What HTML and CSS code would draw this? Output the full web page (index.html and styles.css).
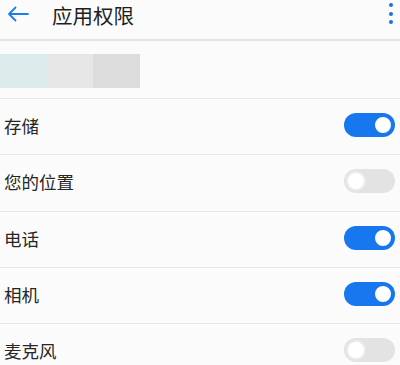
FILE: index.html
```html
<!DOCTYPE html>
<html lang="zh-CN">
<head>
<meta charset="utf-8">
<link rel="stylesheet" href="styles.css">
</head>
<body>
<div class="app">
  <header class="topbar">
    <svg class="back" width="22" height="16" viewBox="0 0 22 16"><path d="M21 8H2M8.5 1.5L2 8l6.5 6.5" fill="none" stroke="#1a7fe8" stroke-width="1.8" stroke-linecap="round" stroke-linejoin="round"/></svg>
    <h1 class="title">应用权限</h1>
    <div class="more"><span></span><span></span><span></span></div>
  </header>
  <section class="appinfo">
    <div class="blur"><i class="b1"></i><i class="b2"></i><i class="b3"></i></div>
  </section>
  <ul class="list">
    <li class="row"><span class="label">存储</span><span class="switch on"></span></li>
    <li class="row"><span class="label">您的位置</span><span class="switch"></span></li>
    <li class="row"><span class="label">电话</span><span class="switch on"></span></li>
    <li class="row"><span class="label">相机</span><span class="switch on"></span></li>
    <li class="row"><span class="label">麦克风</span><span class="switch"></span></li>
  </ul>
</div>
</body>
</html>
```
FILE: styles.css
```css
html, body {
  margin: 0;
  padding: 0;
  background: #fbfbfb;
}
body {
  font-family: "Noto Sans CJK SC", "Noto Sans", sans-serif;
  color: #222;
  width: 400px;
  height: 365px;
  overflow: hidden;
}
.topbar {
  height: 39px;
  display: flex;
  align-items: flex-start;
  border-bottom: 2px solid #e4e4e4;
  box-sizing: content-box;
}
.back {
  margin: 6px 0 0 7px;
  flex: none;
}
.title {
  margin: 0 0 0 23px;
  font-size: 20.5px;
  font-weight: 400;
  line-height: 30px;
  color: #1e1e1e;
  flex: 1;
}
.more {
  display: flex;
  flex-direction: column;
  gap: 4.5px;
  margin: 3px 7px 0 0;
}
.more span {
  width: 4px;
  height: 4px;
  border-radius: 50%;
  background: #1a72e0;
}
.appinfo {
  height: 58px;
  padding-top: 13px;
  box-sizing: border-box;
  border-bottom: 1px solid #e8e8e8;
}
.blur {
  display: flex;
  height: 34px;
}
.blur i {
  width: 46.5px;
  height: 100%;
}
.b1 { background: #dcecec; }
.b2 { background: #e6e6e6; }
.b3 { background: #dcdcdc; }
.list {
  list-style: none;
  margin: 0;
  padding: 0;
}
.row {
  height: 56.25px;
  display: flex;
  align-items: center;
  justify-content: space-between;
  padding: 0 5px 0 4px;
  border-bottom: 1px solid #e8e8e8;
  box-sizing: border-box;
}
.label {
  font-size: 17.5px;
  color: #262626;
  margin-top: -2px;
}
.switch {
  position: relative;
  width: 51px;
  height: 24px;
  border-radius: 12px;
  background: #e3e3e3;
  margin-top: -3px;
}
.switch::after {
  content: "";
  position: absolute;
  top: 2px;
  left: 2px;
  width: 16px;
  height: 16px;
  border-radius: 50%;
  background: #fff;
  border: 2px solid #ececec;
}
.switch.on {
  background: #1677ee;
}
.switch.on::after {
  left: auto;
  right: 2px;
  border-color: #1677ee;
}
```
